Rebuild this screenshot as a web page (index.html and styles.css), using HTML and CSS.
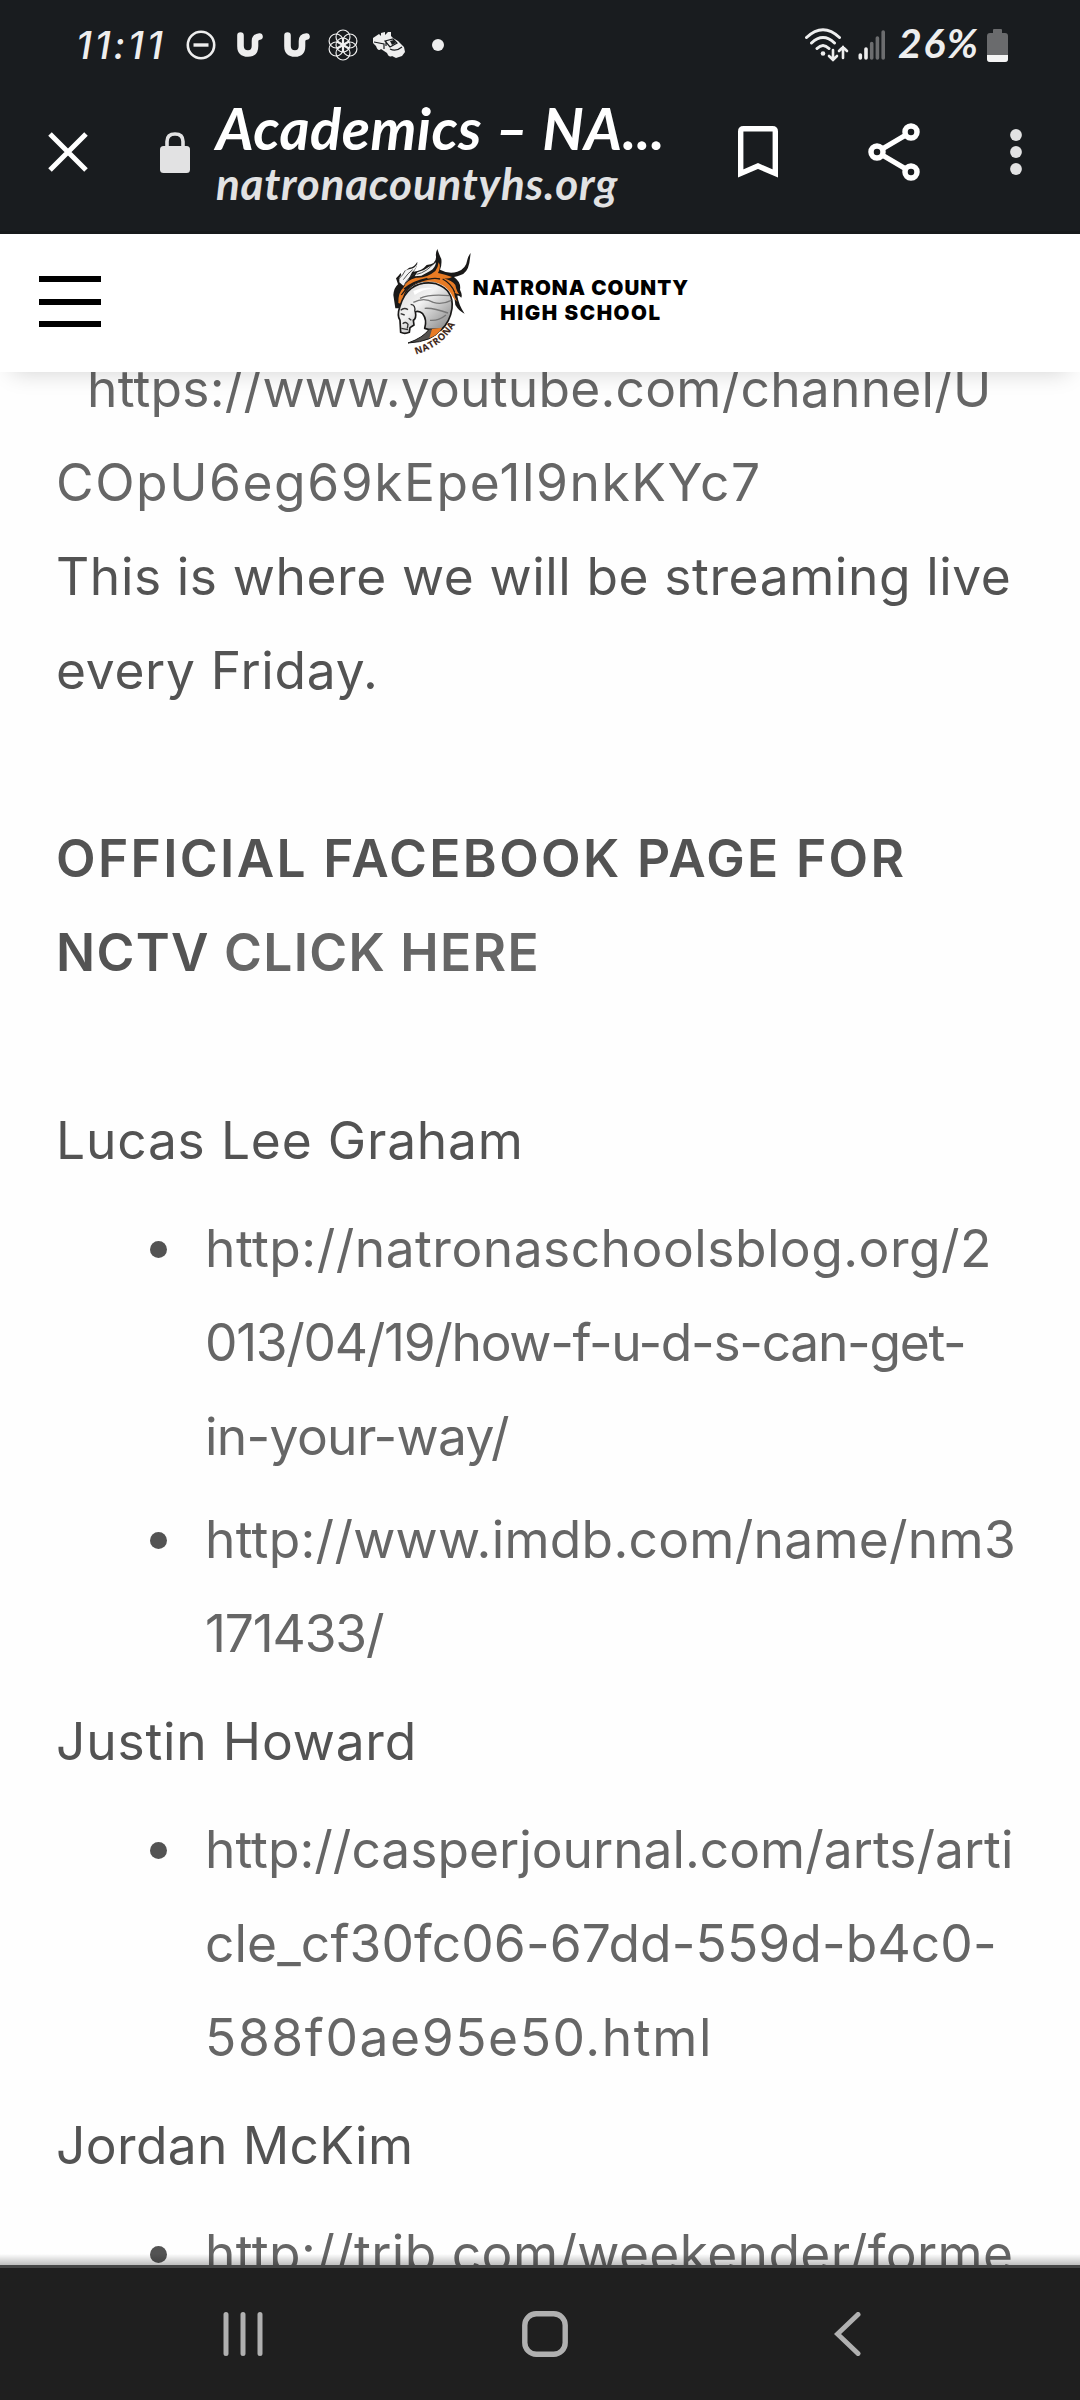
FILE: index.html
```html
<!DOCTYPE html>
<html lang="en">
<head>
<meta charset="utf-8">
<title>Academics</title>
<link rel="stylesheet" href="styles.css">
</head>
<body>
<header class="chrome">
  <div class="status">
    <span class="time">11:11</span>
    <svg class="s-dnd" width="30" height="30" viewBox="0 0 30 30"><circle cx="15" cy="15" r="13.2" fill="none" stroke="#eee" stroke-width="2.6"/><path d="M7.5 15h15" stroke="#eee" stroke-width="3.4"/></svg>
    <svg class="s-u" width="26" height="26" viewBox="0 0 26 26"><path d="M3.5 3.5V14Q3.5 21.5 11 21.5Q18 21.5 18 14V9Q18 5 22.5 4.5" fill="none" stroke="#eee" stroke-width="6.6" stroke-linecap="round"/></svg>
    <svg class="s-u" width="26" height="26" viewBox="0 0 26 26"><path d="M3.5 3.5V14Q3.5 21.5 11 21.5Q18 21.5 18 14V9Q18 5 22.5 4.5" fill="none" stroke="#eee" stroke-width="6.6" stroke-linecap="round"/></svg>
    <svg class="s-flower" width="32" height="32" viewBox="0 0 32 32"><g fill="none" stroke="#eee" stroke-width="1.2"><circle cx="16" cy="16" r="7"/><circle cx="16" cy="8" r="7"/><circle cx="16" cy="24" r="7"/><circle cx="22.9" cy="12" r="7"/><circle cx="22.9" cy="20" r="7"/><circle cx="9.1" cy="12" r="7"/><circle cx="9.1" cy="20" r="7"/></g><path d="M16 9V23M10 12.500L22 19.500M10 19.500L22 12.500" stroke="#eee" stroke-width="2.2"/></svg>
    <svg class="s-car" width="34" height="28" viewBox="0 0 34 28"><path d="M1 7L7 3L9 5V2L13 1V4L16 1H19V5L21 7L26 10L32 16L33 21L30 25L24 27L20 25Q17 27 15 22L9 18Q6 21 4 15L1 12Z" fill="#eee"/><path d="M13 10L21 8L25 12L18 16ZM2 11L12 13L12 18M18 18Q24 21 30 16M14 10V15" fill="none" stroke="#191c1f" stroke-width="1.2"/><path d="M18 10L22 9L24 12L20 14Z" fill="#191c1f"/></svg>
    <svg class="s-dot" width="12" height="12" viewBox="0 0 12 12"><circle cx="6" cy="6" r="6" fill="#eee"/></svg>
    <svg class="s-wifi" width="46" height="36" viewBox="0 0 46 36"><g fill="none" stroke="#eee" stroke-width="3" stroke-linecap="round"><path d="M2.500 10.500Q19 -5 35.500 10.500M7.500 16Q19 5 30.500 16M13 21.500Q19 15.500 25 21.500"/></g><circle cx="19" cy="26.500" r="2.300" fill="#eee"/><path d="M29 23V33M25 29L29 33L33 29M39 31V20M35 24L39 20L43 24" fill="none" stroke="#eee" stroke-width="2.600" stroke-linecap="round"/></svg>
    <svg class="s-signal" width="28" height="30" viewBox="0 0 28 30"><g stroke-width="3.600" stroke-linecap="round"><path d="M2.300 25V28M8 19V28" stroke="#eee"/><path d="M13.700 13.500V28M19.400 8V28M25.200 2V28" stroke="#6c6d6f"/></g></svg>
    <span class="percent">26%</span>
    <svg class="s-battery" width="21" height="33" viewBox="0 0 21 33"><path d="M6 1Q6 0 7 0H14Q15 0 15 1V4H18Q21 4 21 7V30Q21 33 18 33H3Q0 33 0 30V7Q0 4 3 4H6Z" fill="#6a6b6d"/><path d="M0 26H21V30Q21 33 18 33H3Q0 33 0 30Z" fill="#f4f4f4"/></svg>
  </div>
  <div class="toolbar">
    <svg class="t-close" width="40" height="40" viewBox="0 0 40 40"><path d="M2 2L38 38M38 2L2 38" stroke="#fff" stroke-width="5"/></svg>
    <svg class="t-lock" width="30" height="41" viewBox="0 0 30 41"><path d="M7 16V9.500Q7 2 15 2Q23 2 23 9.500V16" fill="none" stroke="#e2e2e3" stroke-width="3.600"/><rect y="14" width="30" height="27" rx="3.500" fill="#e2e2e3"/></svg>
    <div class="page-id"><div class="title">Academics – NA...</div><div class="domain">natronacountyhs.org</div></div>
    <svg class="t-mark" width="40" height="52" viewBox="0 0 40 52"><path d="M2.700 47.500V5.500Q2.700 2.700 5.500 2.700H34.500Q37.300 2.700 37.300 5.500V47.500L20 40Z" fill="none" stroke="#fff" stroke-width="5.400"/></svg>
    <svg class="t-share" width="52" height="58" viewBox="0 0 52 58"><path d="M43 9L9 29L43 49" fill="none" stroke="#fff" stroke-width="5"/><g fill="#191c1f" stroke="#fff" stroke-width="5.500"><circle cx="43" cy="9" r="6"/><circle cx="9" cy="29" r="6"/><circle cx="43" cy="49" r="6"/></g></svg>
    <svg class="t-more" width="12" height="46" viewBox="0 0 12 46"><g fill="#e2e2e3"><circle cx="6" cy="6" r="5.900"/><circle cx="6" cy="23" r="5.900"/><circle cx="6" cy="40" r="5.900"/></g></svg>
  </div>
</header>
<div class="site-header">
  <div class="burger"><i></i><i></i><i></i></div>
  <svg class="crest" width="92" height="115" viewBox="0 0 276 345">
    <defs><linearGradient id="coat" x1="0" y1="0" x2="1" y2="1"><stop offset="0" stop-color="#d8d8d8"/><stop offset=".4" stop-color="#f2f2f2"/><stop offset="1" stop-color="#777"/></linearGradient></defs>
    <path d="M46 190L40 150Q42 128 54 118L48 100Q56 92 62 84L66 96Q72 78 88 68Q104 66 112 50Q112 68 100 80Q126 78 140 60Q170 58 168 34Q166 24 172 12Q178 30 184 42Q186 60 180 74Q206 88 232 80Q258 72 262 44Q264 34 272 24Q270 40 268 54Q262 84 242 90Q232 94 222 96Q244 112 240 134Q248 150 244 158Q236 150 232 152Q236 180 254 206Q238 200 226 180Q222 100 130 110Q74 120 60 190Z" fill="#1a1918"/>
    <path d="M58 98Q72 74 90 72Q104 70 112 56Q110 70 96 82L84 106L70 122L58 112ZM112 82Q132 78 146 66Q160 62 168 52Q166 70 150 78L124 92L104 94Z" fill="#f4f4f4"/>
    <path d="M54 104Q70 90 76 76M70 104Q84 84 98 74M110 88Q140 82 164 52M74 116Q90 92 104 86" fill="none" stroke="#333" stroke-width="2.500"/>
    <path d="M55 174Q54 142 70 128Q80 104 108 98Q140 100 166 78Q174 68 176 52Q184 66 174 84Q196 88 216 96Q206 102 190 100Q216 106 226 120Q230 140 238 148Q226 146 222 140Q222 154 232 170Q218 160 212 144Q196 118 160 110Q110 106 86 128Q68 142 66 178Z" fill="#e87b24"/>
    <path d="M64 150Q86 116 124 108Q160 96 180 102M72 132Q100 108 142 100M188 102Q214 116 224 142" fill="none" stroke="#1a1918" stroke-width="4"/>
    <path d="M60 184Q70 148 94 130Q124 108 168 116Q222 134 216 190Q210 232 182 256L148 254L134 250Q142 224 128 206Q118 196 106 200Q110 220 100 226L102 240L90 248L88 262Q74 268 62 262L60 226Q50 212 60 184Z" fill="url(#coat)" stroke="#1a1918" stroke-width="5" stroke-linejoin="round"/>
    <path d="M100 138Q132 124 160 130Q126 134 104 150Z" fill="#fff"/>
    <path d="M100 172Q132 156 160 172Q186 180 214 166M120 160Q150 146 208 152M134 190Q160 188 204 204M150 226Q176 228 198 210" fill="none" stroke="#777" stroke-width="4"/>
    <path d="M62 196Q72 186 84 194M62 206L74 210M92 178Q108 180 104 200M68 236Q78 228 84 238L82 250M94 226L86 220M64 250L84 254" fill="none" stroke="#333" stroke-width="4"/>
    <path d="M148 252L184 252Q160 290 84 294Q130 278 148 252Z" fill="#54514e" stroke="#1a1918" stroke-width="3"/>
    <path d="M156 252L186 248Q176 268 148 280Z" fill="#e87b24"/>
    <path id="curve" d="M108 328Q212 298 242 198" fill="none"/>
    <text class="crest-name"><textPath href="#curve" textLength="152">NATRONA</textPath></text>
  </svg>
  <div class="school"><div class="school-a">NATRONA COUNTY</div><div class="school-b">HIGH SCHOOL</div></div>
</div>
<main class="viewport">
  <div class="content">
    <p><a class="first">https://www.youtube.com/channel/U</a><a class="channel">COpU6eg69kEpe1l9nkKYc7</a><span class="stream">This is where we will be streaming live</span><span class="friday">every Friday.</span></p>
    <p class="gap"><b class="official">OFFICIAL FACEBOOK PAGE FOR</b><b class="nctv">NCTV <em>CLICK HERE</em></b></p>
    <p class="gap"><span class="name">Lucas Lee Graham</span></p>
    <ul>
      <li><a class="blog-a">http://natronaschoolsblog.org/2</a><a class="blog-b">013/04/19/how-f-u-d-s-can-get-</a><a class="blog-c">in-your-way/</a></li>
      <li><a class="imdb-a">http://www.imdb.com/name/nm3</a><a class="imdb-b">171433/</a></li>
    </ul>
    <p><span class="name">Justin Howard</span></p>
    <ul><li><a>http://casperjournal.com/arts/arti</a><a class="casper-b">cle_cf30fc06-67dd-559d-b4c0-</a><a class="casper-c">588f0ae95e50.html</a></li></ul>
    <p><span class="name-tight">Jordan McKim</span></p>
    <ul><li><a class="trib">http://trib.com/weekender/forme</a></li></ul>
  </div>
</main>
<nav class="navbar">
  <svg class="n-recent" width="40" height="44" viewBox="0 0 40 44"><path d="M3 2.500V41.500M20 2.500V41.500M37 2.500V41.500" stroke="#b0b0b0" stroke-width="5" stroke-linecap="round"/></svg>
  <svg class="n-home" width="46" height="46" viewBox="0 0 46 46"><rect x="2.800" y="2.800" width="40.400" height="40.400" rx="11.500" fill="none" stroke="#b0b0b0" stroke-width="5.400"/></svg>
  <svg class="n-back" width="27" height="44" viewBox="0 0 27 44"><path d="M24 2.500L3.500 22L24 41.500" fill="none" stroke="#b0b0b0" stroke-width="5" stroke-linecap="round"/></svg>
</nav>
</body>
</html>
```
FILE: styles.css
```css
* { box-sizing: border-box; }
html, body { height: 100%; overflow: hidden; }
body {
  margin: 0;
  display: flex;
  flex-direction: column;
  background: #fefefe;
  font-family: Inter, "Liberation Sans", sans-serif;
}
svg { display: block; flex: none; }

.chrome { flex: none; height: 234px; background: #191c1f; border-bottom: 3px solid #16191b; }
.status { display: flex; align-items: center; height: 90px; color: #eee; }
.time { width: 108px; padding-left: 76px; font: italic 500 38px/44px Inter, sans-serif; letter-spacing: 3px; white-space: nowrap; }
.s-dnd { margin-left: 78px; }
.s-u { margin-left: 21px; }
.s-flower { margin-left: 17px; }
.s-car { margin-left: 13px; }
.s-dot { margin-left: 26px; }
.s-wifi { margin-left: 360px; }
.s-signal { margin-left: 8px; }
.percent { width: 89px; margin: 0 0 4px 12px; font: italic 700 41px/44px Lato, sans-serif; letter-spacing: 1.5px; white-space: nowrap; }

.toolbar { display: flex; align-items: center; height: 124px; }
.t-close { margin-left: 48px; }
.t-lock { margin-left: 72px; }
.page-id { width: 460px; margin-left: 26px; font-family: Lato, sans-serif; font-style: italic; font-weight: 700; white-space: nowrap; }
.title { font-size: 58px; line-height: 62px; letter-spacing: 0.4px; color: #fff; }
.domain { font-size: 44px; line-height: 48px; letter-spacing: 0.75px; color: #e2e2e3; }
.t-mark { margin-left: 62px; }
.t-share { margin-left: 90px; }
.t-more { margin-left: 90px; }

.site-header {
  position: relative;
  z-index: 1;
  flex: none;
  display: flex;
  align-items: flex-start;
  height: 138px;
  padding: 11px 0 0 39px;
  background: #fff;
  box-shadow: 0 12px 22px -12px rgba(0, 0, 0, 0.18);
}
.burger { display: flex; flex-direction: column; justify-content: space-between; width: 62px; height: 51px; margin-top: 31px; }
.burger i { height: 6px; background: #000; }
.crest { margin-left: 279px; }
.crest-name { font: 700 28px "Open Sans", sans-serif; fill: #38251b; stroke: #e3b48c; stroke-width: 1px; paint-order: stroke; }
.school { width: 218px; margin-top: 30px; font-weight: 900; font-size: 20.5px; line-height: 25px; text-align: center; white-space: nowrap; color: #000; }
.school-a { letter-spacing: 1.05px; }
.school-b { letter-spacing: 1.6px; }

.viewport {
  position: relative;
  flex: none;
  height: 1893px;
  overflow: hidden;
}
.viewport::after {
  content: "";
  position: absolute;
  inset: auto 0 0 0;
  height: 11px;
  background: linear-gradient(rgba(0, 0, 0, 0), rgba(0, 0, 0, 0.25));
}
.content { margin-top: -31px; padding-left: 56px; font-size: 51.5px; line-height: 94px; color: #535353; }
p { margin: 0; }
p > *, li > a { display: block; white-space: nowrap; }
b { font-weight: 600; }
a, em { color: #666; font-style: normal; }
.gap { margin-top: 94px; }
.first { margin-left: 31px; letter-spacing: 0.23px; }
.channel { letter-spacing: 1.55px; }
.stream { letter-spacing: 0.59px; }
.friday { letter-spacing: 0.71px; }
.official { letter-spacing: 2.35px; }
.nctv { letter-spacing: 1.31px; }
.name { letter-spacing: 0.8px; }
.name-tight { letter-spacing: 0.36px; }
.blog-a { letter-spacing: 0.48px; }
.blog-b { letter-spacing: -1.3px; }
.blog-c { letter-spacing: -0.66px; }
.imdb-a { letter-spacing: 0.26px; }
.imdb-b { letter-spacing: -1.15px; }
.casper-b { letter-spacing: 0.11px; }
.casper-c { letter-spacing: 1.59px; }
.trib { letter-spacing: 0.38px; }
ul { margin: 14px 0; padding: 0 0 0 149px; list-style: none; }
li { position: relative; }
li + li { margin-top: 9px; }
li::before { content: ""; position: absolute; left: -55px; top: 40px; width: 17px; height: 17px; border-radius: 50%; background: #535353; }

.navbar {
  flex: none;
  display: flex;
  align-items: center;
  height: 135px;
  border-top: 3px solid #454646;
  background: #1f1f1f;
}
.n-recent { margin-left: 223px; }
.n-home { margin-left: 259px; }
.n-back { margin-left: 266px; }
```
